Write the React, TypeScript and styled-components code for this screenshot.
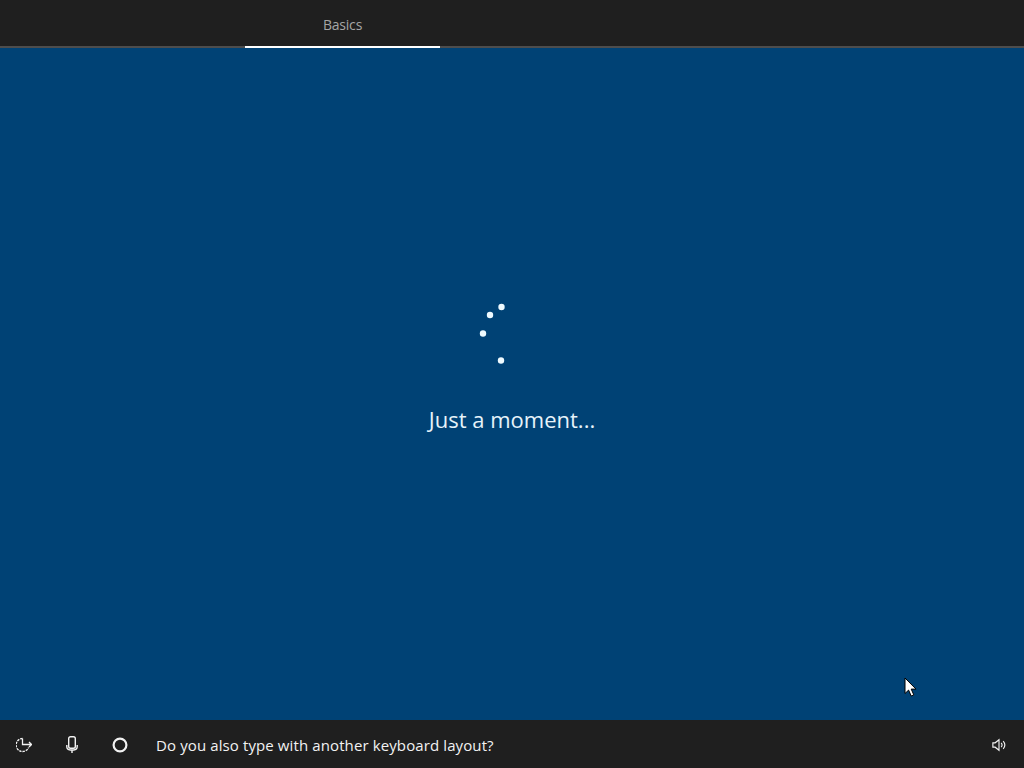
import { createGlobalStyle, styled } from "styled-components";

const GlobalStyle = createGlobalStyle`
  html, body {
    margin: 0;
    padding: 0;
    height: 100%;
    overflow: hidden;
    background: #004275;
    font-family: "Open Sans", "Noto Sans", "Liberation Sans", sans-serif;
  }
`;

const Page = styled.div`
  position: relative;
  display: flex;
  flex-direction: column;
  width: 1024px;
  height: 768px;
`;

const TopBar = styled.header`
  display: flex;
  height: 46px;
  flex-shrink: 0;
  padding-left: 245px;
  background: #1f1f1f;
  border-bottom: 2px solid #4d4d4d;
`;

const Tab = styled.div`
  display: flex;
  align-items: center;
  justify-content: center;
  width: 195px;
  height: 48px;
  box-sizing: border-box;
  padding-top: 3px;
  border-bottom: 2px solid #ffffff;
  color: #a6a6a6;
  font-size: 14px;
  letter-spacing: -0.2px;
`;

const Main = styled.main`
  flex: 1;
  display: flex;
  flex-direction: column;
  align-items: center;
  justify-content: center;
  gap: 32px;
  padding-bottom: 32px;
  background: #004275;
`;

const Spinner = styled.svg`
  display: block;
  width: 80px;
  height: 70px;
  fill: #eefaff;
`;

const Message = styled.div`
  color: #e6f3fa;
  font-size: 22px;
  line-height: 30px;
`;

const BottomBar = styled.footer`
  display: flex;
  align-items: center;
  height: 48px;
  flex-shrink: 0;
  padding: 0 16px;
  background: #1f1f1f;
  color: #f2f2f2;
`;

const IconButton = styled.div`
  display: flex;
  align-items: center;
  justify-content: center;
  width: 16px;
  height: 18px;
  margin: 2px 32px 0 0;
  color: #f2f2f2;
`;

const Prompt = styled.div`
  flex: 1;
  font-size: 15px;
  letter-spacing: 0.11px;
  margin-left: -4px;
  padding-top: 2px;
`;

const VolumeIcon = styled.svg`
  display: block;
  width: 14px;
  height: 14px;
  margin: 2px 2px 0 0;
`;

const Cursor = styled.svg`
  position: absolute;
  left: 904px;
  top: 677px;
  width: 13px;
  height: 20px;
`;

function App() {
  return (
    <Page>
      <GlobalStyle />
      <TopBar>
        <Tab>Basics</Tab>
      </TopBar>
      <Main>
        <Spinner viewBox="0 0 80 70">
          <circle cx="29.5" cy="5" r="3.2" />
          <circle cx="18" cy="13" r="3.2" />
          <circle cx="11" cy="31.5" r="3.2" />
          <circle cx="29" cy="58.5" r="3.2" />
        </Spinner>
        <Message>Just a moment...</Message>
      </Main>
      <BottomBar>
        <IconButton>
          <svg width="16" height="16" viewBox="0 0 16 16" fill="none" stroke="currentColor" strokeWidth="1.3">
            <path d="M6.5 1.5A6.5 6.5 0 1 0 12.6 10.5" strokeDasharray="2.4 0.9" />
            <path d="M6.5 1.5V7.5H15.5M13 5 15.5 7.5 13 10" />
          </svg>
        </IconButton>
        <IconButton>
          <svg width="16" height="18" viewBox="0 0 16 18" fill="none" stroke="currentColor" strokeWidth="1.4">
            <rect x="4.7" y="0.8" width="6.6" height="11.4" rx="1.8" />
            <path d="M2.8 9v1.6a3.4 3.4 0 0 0 3.4 3.4h3.6a3.4 3.4 0 0 0 3.4-3.4V9M8 14v3" />
          </svg>
        </IconButton>
        <IconButton>
          <svg width="16" height="16" viewBox="0 0 16 16" fill="none" stroke="currentColor" strokeWidth="2.2">
            <circle cx="8" cy="8" r="6.4" />
          </svg>
        </IconButton>
        <Prompt>Do you also type with another keyboard layout?</Prompt>
        <VolumeIcon viewBox="0 0 16 16" fill="none" stroke="currentColor" strokeWidth="1.3">
          <path d="M1 5.5h2.6L8 2v12L3.6 10.5H1z" />
          <path d="M10.5 5.5a4 4 0 0 1 0 5M12.8 3.5a7 7 0 0 1 0 9" />
        </VolumeIcon>
      </BottomBar>
      <Cursor viewBox="0 0 13 20">
        <path d="M1 1v15.5l3.6-3.4 2.6 5.9 2.6-1.1-2.6-5.8H12z" fill="#ffffff" stroke="#000000" strokeWidth="1" />
      </Cursor>
    </Page>
  );
}

export default App;
